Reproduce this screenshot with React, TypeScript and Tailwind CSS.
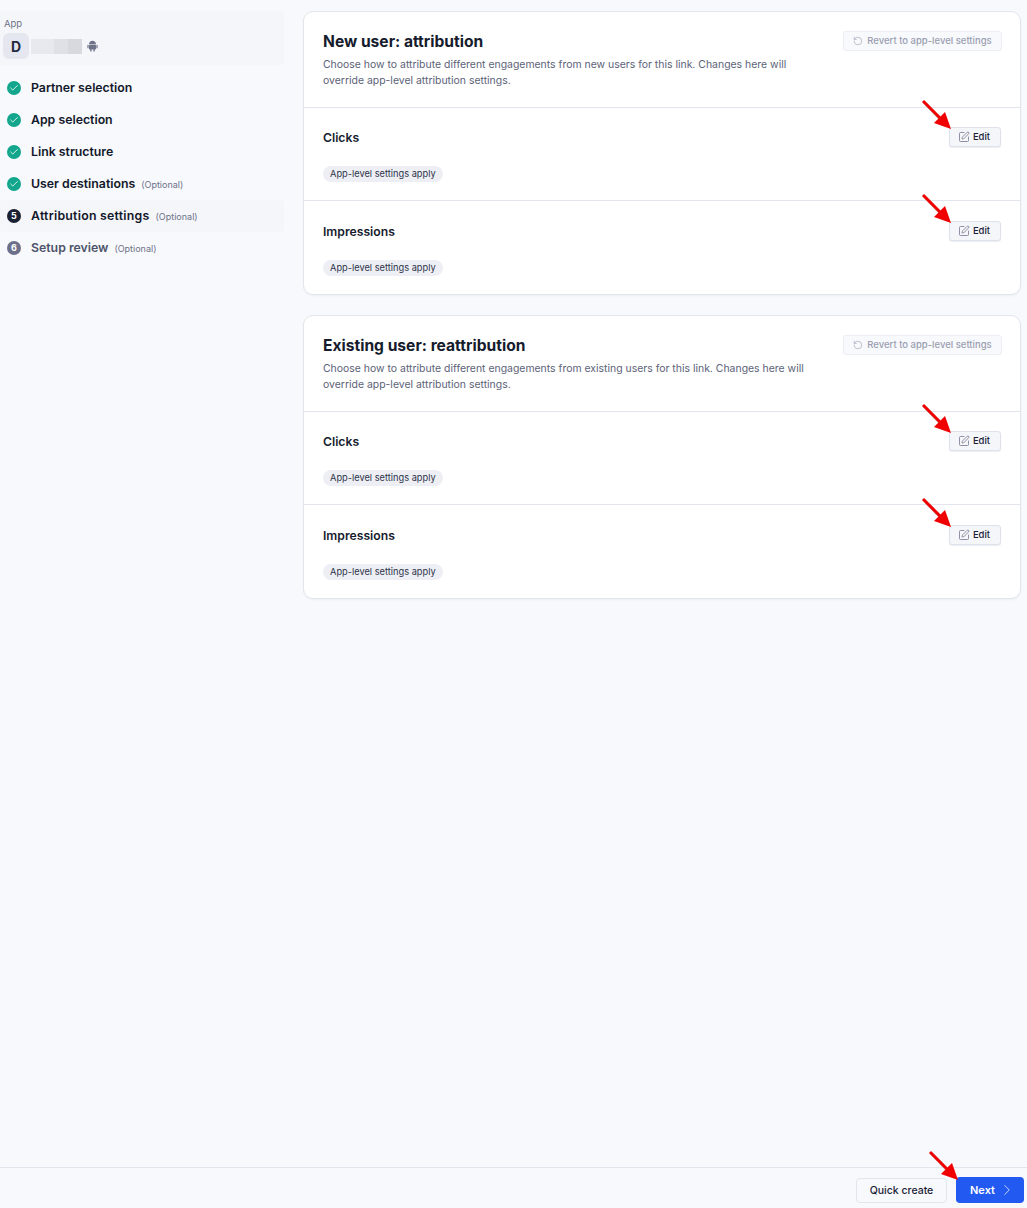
import React from 'react';
import { Check, ChevronRight, RotateCcw, SquarePen } from 'lucide-react';

const steps = [
  { label: 'Partner selection', done: true },
  { label: 'App selection', done: true },
  { label: 'Link structure', done: true },
  { label: 'User destinations', done: true, optional: true },
  { label: 'Attribution settings', num: 5, optional: true, active: true },
  { label: 'Setup review', num: 6, optional: true },
];

const Arrow = ({ className }: { className: string }) => (
  <svg className={className} width="34" height="34" viewBox="0 0 34 34">
    <path d="M2 2 L22 23" stroke="#b9b9b9" strokeWidth="3" transform="translate(1 1)" />
    <path d="M2 2 L22 22" stroke="#f00000" strokeWidth="3" />
    <polygon points="30,30 13,24 24,13" fill="#f00000" />
  </svg>
);

// android glyph, full robot
const AndroidIcon = () => (
  <svg className="ml-[5px] text-[#6e7388]" width="11" height="12" viewBox="0 0 11 12" fill="currentColor">
    <path d="M2 4.2 C2 2 3.6 0.8 5.5 0.8 C7.4 0.8 9 2 9 4.2 Z" />
    <rect x="2" y="4.8" width="7" height="4.6" rx="0.6" />
    <rect x="0.4" y="4.8" width="1.2" height="3.6" rx="0.6" />
    <rect x="9.4" y="4.8" width="1.2" height="3.6" rx="0.6" />
    <rect x="3.2" y="9" width="1.4" height="2.6" rx="0.6" />
    <rect x="6.4" y="9" width="1.4" height="2.6" rx="0.6" />
  </svg>
);

const EditButton = () => (
  <div className="relative">
    <Arrow className="absolute -left-[28px] -top-[28px]" />
    <button className="flex h-[20px] w-[52px] items-center justify-center gap-[3px] rounded-[3px] border border-[#dfe1ec] bg-[#f5f6fa] pr-[2px] text-[9.5px] font-medium text-[#1b2236] shadow-[0_1px_1px_rgba(30,40,80,0.08)]">
      <SquarePen size={12} strokeWidth={1.5} className="text-[#6b7089]" />
      Edit
    </button>
  </div>
);

const Section = ({ title, last }: { title: string; last?: boolean }) => (
  <div className={`flex flex-col border-t border-[#e3e5ee] pl-[19px] pr-[19px] ${last ? 'h-[94px]' : 'h-[93px]'}`}>
    <div className={`flex items-start justify-between ${last ? 'pt-[20px]' : 'pt-[19px]'}`}>
      <h3 className="text-[12.2px] leading-[21px] font-semibold text-[#161c2d]">{title}</h3>
      <EditButton />
    </div>
    <div className="mt-[11px]">
      <span className="inline-flex h-[16px] items-center rounded-full bg-[#eeeff5] px-[7px] text-[9.25px] text-[#2c3348]">
        App-level settings apply
      </span>
    </div>
  </div>
);

const Card = ({ title, text }: { title: string; text: string }) => (
  <section className="rounded-[10px] border border-[#e3e5ee] bg-white shadow-[0_1px_2px_rgba(30,40,80,0.05)]">
    <div className="flex h-[95px] items-start justify-between pt-[19px] pl-[19px] pr-[18px]">
      <div className="w-[490px]">
        <h2 className="text-[15.6px] leading-[22px] font-bold text-[#161c2d]">{title}</h2>
        <p className="mt-[4px] text-[10.45px] leading-[16px] text-[#5d6379]">{text}</p>
      </div>
      <button className="flex h-[20px] w-[159px] items-center justify-center gap-[4px] rounded-[3px] border border-[#eceef4] bg-[#f8f9fc] text-[9.5px] font-medium text-[#9a9eb0]">
        <RotateCcw size={10} strokeWidth={1.5} />
        Revert to app-level settings
      </button>
    </div>
    <Section title="Clicks" />
    <Section title="Impressions" last />
  </section>
);

export default function App() {
  return (
    <div className="flex h-screen flex-col bg-[#f8f9fc] font-['Inter',sans-serif]">
      <div className="flex flex-1 gap-[19px] pt-[11px] pr-[6px]">
        <aside className="w-[284px] shrink-0">
          <div className="h-[54px] rounded-r-[3px] bg-[#f5f6fa] pl-[3px] pt-[7px]">
            <div className="pl-px text-[9.5px] leading-[12px] text-[#6d7288]">App</div>
            <div className="mt-[3px] flex items-center">
              <div className="flex h-[26px] w-[26px] items-center justify-center rounded-[6px] bg-[#e5e7f0] text-[14px] font-bold text-[#232a40]">
                D
              </div>
              <div className="ml-[2px] flex h-[15px] w-[51px]">
                <div className="w-[23px] bg-[#e8e9ee]" />
                <div className="w-[14px] bg-[#e0e1e7]" />
                <div className="w-[14px] bg-[#d8d9df]" />
              </div>
              <AndroidIcon />
            </div>
          </div>
          <nav className="mt-[7px]">
            {steps.map((s) => (
              <div
                key={s.label}
                className={`flex h-[32px] items-center rounded-[3px] pl-[7px] ${s.active ? 'bg-[#f5f6fa]' : ''}`}
              >
                <span
                  className={`flex h-[14px] w-[14px] shrink-0 items-center justify-center rounded-full text-[9px] font-bold text-white ${
                    s.done ? 'bg-[#12a68c]' : s.active ? 'bg-[#1b2033]' : 'bg-[#6c7189]'
                  }`}
                >
                  {s.done ? <Check size={10} strokeWidth={2} /> : s.num}
                </span>
                <span
                  className={`ml-[10px] pt-px text-[12.3px] font-semibold ${s.active ? 'tracking-[0.25px]' : ''} ${
                    s.num === 6 ? 'text-[#4d5369]' : 'text-[#12182a]'
                  }`}
                >
                  {s.label}
                </span>
                {s.optional && <span className="ml-[6px] pt-px text-[9px] text-[#6d7288]">(Optional)</span>}
              </div>
            ))}
          </nav>
        </aside>
        <main className="flex flex-1 flex-col gap-[20px]">
          <Card
            title="New user: attribution"
            text="Choose how to attribute different engagements from new users for this link. Changes here will override app-level attribution settings."
          />
          <Card
            title="Existing user: reattribution"
            text="Choose how to attribute different engagements from existing users for this link. Changes here will override app-level attribution settings."
          />
        </main>
      </div>
      <footer className="flex h-[41px] items-start justify-end gap-[9px] border-t border-[#e3e5ee] pt-[9px] pr-[3px]">
        <button className="mt-px h-[25px] w-[91px] rounded-[4px] border border-[#e3e5ee] bg-[#f8f9fc] text-[10.5px] font-medium text-[#1b2236]">
          Quick create
        </button>
        <div className="relative">
          <Arrow className="absolute -left-[28px] -top-[27px] z-10" />
          <button className="flex h-[26px] w-[68px] items-center gap-[3px] rounded-[4px] bg-[#2259f0] pl-[14px] text-[11px] font-semibold text-white">
            Next
            <ChevronRight size={18} strokeWidth={1} />
          </button>
        </div>
      </footer>
    </div>
  );
}
